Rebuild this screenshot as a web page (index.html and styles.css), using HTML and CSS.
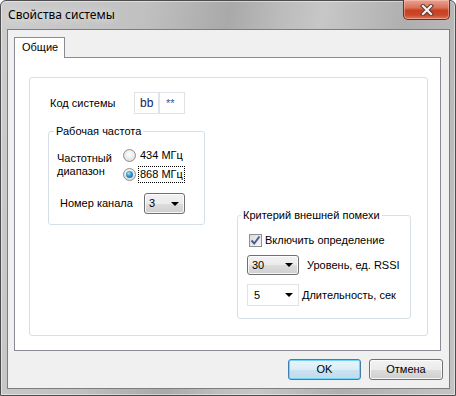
FILE: index.html
```html
<!DOCTYPE html>
<html lang="ru">
<head>
  <meta charset="UTF-8">
  <title>Свойства системы</title>
  <link rel="stylesheet" href="styles.css">
</head>
<body>
  <div class="window">
    <div class="titlebar">
      <span class="title">Свойства системы</span>
      <div class="close">
        <svg width="14" height="12" viewBox="0 0 14 12">
          <path d="M3 2 L11 10 M11 2 L3 10" stroke="#5b3a34" stroke-width="4.2" stroke-linecap="square"/>
          <path d="M3 2 L11 10 M11 2 L3 10" stroke="#f4f1f0" stroke-width="2.2" stroke-linecap="square"/>
        </svg>
      </div>
    </div>

    <div class="client">
      <div class="tabs">
        <div class="tab">Общие</div>
      </div>

      <div class="tab-panel">
        <div class="page">
          <div class="col-left">
            <div class="code-row">
              <span class="code-label">Код системы</span>
              <span class="field code-a">bb</span>
              <span class="field code-b">**</span>
            </div>

            <fieldset class="group group-freq">
              <legend>Рабочая частота</legend>
              <div class="freq-row">
                <div class="freq-label">Частотный<br>диапазон</div>
                <div class="radios">
                  <div class="radio-row">
                    <span class="radio"></span>
                    <span class="radio-text">434 МГц</span>
                  </div>
                  <div class="radio-row">
                    <span class="radio checked"></span>
                    <span class="radio-text focus">868 МГц</span>
                  </div>
                </div>
              </div>
              <div class="channel-row">
                <span class="channel-label">Номер канала</span>
                <div class="combo combo-btn combo-channel">
                  <span>3</span>
                  <span class="arrow"></span>
                </div>
              </div>
            </fieldset>
          </div>

          <fieldset class="group group-noise">
            <legend>Критерий внешней помехи</legend>
            <div class="check-row">
              <span class="checkbox">
                <svg width="11" height="11" viewBox="0 0 11 11">
                  <path d="M1.5 5.5 L4.2 8.5 L9.5 1.5" fill="none" stroke="#4a5c94" stroke-width="2"/>
                </svg>
              </span>
              <span>Включить определение</span>
            </div>
            <div class="combo-row">
              <div class="combo combo-btn combo-level">
                <span>30</span>
                <span class="arrow"></span>
              </div>
              <span class="level-label">Уровень, ед. RSSI</span>
            </div>
            <div class="combo-row combo-row-last">
              <div class="combo combo-edit">
                <span>5</span>
                <span class="arrow"></span>
              </div>
              <span class="duration-label">Длительность, сек</span>
            </div>
          </fieldset>
        </div>
      </div>

      <div class="buttons">
        <div class="btn btn-default">OK</div>
        <div class="btn">Отмена</div>
      </div>
    </div>
  </div>
</body>
</html>
```

FILE: styles.css
```css
body {
  margin: 0;
  background: #ffffff;
  font-family: "Liberation Sans", Arial, sans-serif;
  font-size: 11px;
  line-height: 13px;
  color: #000;
}

.window {
  width: 456px;
  height: 396px;
  box-sizing: border-box;
  border: 1px solid #4d4d4d;
  border-radius: 6px 6px 0 0;
  background: linear-gradient(100deg, #cdcdcd 0%, #c0c0c0 28%, #a9a9a9 44%, #bcbcbc 54%, #c7c7c7 62%, #afafaf 78%, #c4c4c4 100%);
  box-shadow: inset 0 0 0 1px rgba(255, 255, 255, 0.45);
  display: flex;
  flex-direction: column;
}

.titlebar {
  height: 28px;
  display: flex;
  justify-content: space-between;
  align-items: flex-start;
}

.title {
  font-family: "Noto Sans", sans-serif;
  font-size: 12px;
  line-height: 28px;
  padding-left: 7px;
  color: #000;
  text-shadow: 0 0 8px rgba(255, 255, 255, 0.9);
}

.close {
  width: 47px;
  height: 20px;
  box-sizing: border-box;
  margin-top: -1px;
  margin-right: 5px;
  border: 1px solid #6f2d22;
  border-top: none;
  border-radius: 0 0 5px 5px;
  background: linear-gradient(#e8a493 0%, #d9725b 40%, #c8401f 55%, #c94a2b 80%, #df7a5c 100%);
  box-shadow: inset 0 0 0 1px rgba(255, 210, 200, 0.45);
  display: flex;
  align-items: center;
  justify-content: center;
}

.client {
  flex: 1;
  margin: 0 5px 6px 6px;
  border: 1px solid #7d7d7d;
  background: #f0f0f0;
  padding: 7px 0 0 6px;
}

.tabs {
  display: flex;
}

.tab {
  position: relative;
  z-index: 1;
  width: 51px;
  height: 21px;
  box-sizing: border-box;
  border: 1px solid #898c95;
  border-bottom: none;
  background: #fff;
  padding-left: 7px;
  line-height: 18px;
}

.tab-panel {
  width: 427px;
  height: 294px;
  box-sizing: border-box;
  margin-top: -1px;
  border: 1px solid #898c95;
  background: #fff;
  padding: 19px 12px 14px 14px;
  display: flex;
  flex-direction: column;
}

.page {
  flex: 1;
  border: 1px solid #d5dfe5;
  border-radius: 3px;
  padding: 14px 0 0 18px;
  display: flex;
  align-items: flex-start;
}

.col-left {
  width: 157px;
}

.code-row {
  display: flex;
  align-items: center;
  padding-left: 2px;
}

.code-label {
  width: 84px;
}

.field {
  height: 22px;
  box-sizing: border-box;
  border: 1px solid #e0e2e8;
  display: flex;
  align-items: center;
}

.code-a {
  width: 25px;
  padding-left: 5px;
  color: #1b1b5a;
  font-size: 12px;
}

.code-b {
  width: 26px;
  padding-left: 6px;
  color: #2a55b0;
}

.group {
  margin: 0;
  padding: 0;
  border: 1px solid #d5dfe5;
  border-radius: 3px;
  min-width: 0;
}

.group legend {
  padding: 0 2px;
  line-height: 13px;
}

.group-freq {
  margin-top: 11px;
  width: 157px;
  box-sizing: border-box;
  padding: 8px 0 10px 0;
}

.group-freq legend {
  margin-left: 5px;
}

.freq-row {
  display: flex;
  align-items: center;
  padding-left: 8px;
}

.freq-label {
  width: 66px;
}

.radio-row {
  height: 19px;
  display: flex;
  align-items: center;
}

.radio {
  width: 13px;
  height: 13px;
  box-sizing: border-box;
  border: 1px solid #8f8f8f;
  border-radius: 50%;
  background: radial-gradient(circle at 50% 40%, #ffffff 0%, #eeeeee 45%, #cfcfcf 100%);
  display: flex;
  align-items: center;
  justify-content: center;
  margin-right: 2px;
}

.radio.checked::after {
  content: "";
  width: 7px;
  height: 7px;
  border-radius: 50%;
  background: radial-gradient(circle at 40% 35%, #a8e4fb 0%, #3a9ad3 40%, #0f4b78 100%);
}

.radio-text {
  padding: 1px 1px;
  border: 1px dotted transparent;
}

.radio-text.focus {
  border-color: #000;
}

.channel-row {
  display: flex;
  align-items: center;
  margin-top: 9px;
  padding-left: 11px;
}

.channel-label {
  width: 84px;
}

.combo {
  box-sizing: border-box;
  display: flex;
  align-items: center;
  justify-content: space-between;
  padding: 0 5px 0 4px;
}

.combo-btn {
  border: 1px solid #707070;
  border-radius: 3px;
  background: linear-gradient(#f2f2f2 0%, #ebebeb 50%, #dddddd 50%, #cfcfcf 100%);
  box-shadow: inset 0 0 0 1px rgba(255, 255, 255, 0.8);
}

.combo-channel {
  width: 41px;
  height: 21px;
}

.combo-level {
  width: 52px;
  height: 20px;
}

.combo-edit {
  width: 52px;
  height: 22px;
  border: 1px solid #e3e3e3;
  background: #fff;
  padding-left: 6px;
}

.arrow {
  width: 0;
  height: 0;
  border-left: 4px solid transparent;
  border-right: 4px solid transparent;
  border-top: 4px solid #000;
}

.group-noise {
  margin-top: 117px;
  margin-left: 32px;
  width: 174px;
  box-sizing: border-box;
  padding: 10px 0 12px 0;
}

.group-noise legend {
  margin-left: 3px;
}

.check-row {
  height: 17px;
  display: flex;
  align-items: center;
  padding-left: 11px;
}

.checkbox {
  width: 13px;
  height: 13px;
  box-sizing: border-box;
  border: 1px solid #8e8f8f;
  background: linear-gradient(135deg, #dcdcdc, #f6f6f6);
  display: flex;
  align-items: center;
  justify-content: center;
  margin-right: 3px;
}

.combo-row {
  display: flex;
  align-items: center;
  margin-top: 6px;
  padding-left: 9px;
}

.combo-row-last {
  margin-top: 9px;
}

.level-label {
  margin-left: 8px;
}

.duration-label {
  margin-left: 3px;
}

.buttons {
  display: flex;
  justify-content: flex-end;
  gap: 8px;
  margin-top: 8px;
  padding-right: 6px;
}

.btn {
  width: 74px;
  height: 21px;
  box-sizing: border-box;
  border: 1px solid #707070;
  border-radius: 3px;
  background: linear-gradient(#f2f2f2 0%, #ebebeb 50%, #dddddd 50%, #cfcfcf 100%);
  box-shadow: inset 0 0 0 1px rgba(255, 255, 255, 0.8);
  display: flex;
  align-items: center;
  justify-content: center;
}

.btn-default {
  width: 73px;
  border-color: #3c7fb1;
  background: linear-gradient(#eaf5fb 0%, #dcedf7 50%, #cbe3f1 50%, #c0dbeb 100%);
  box-shadow: inset 0 0 0 1px #6fd4f7;
}
```
